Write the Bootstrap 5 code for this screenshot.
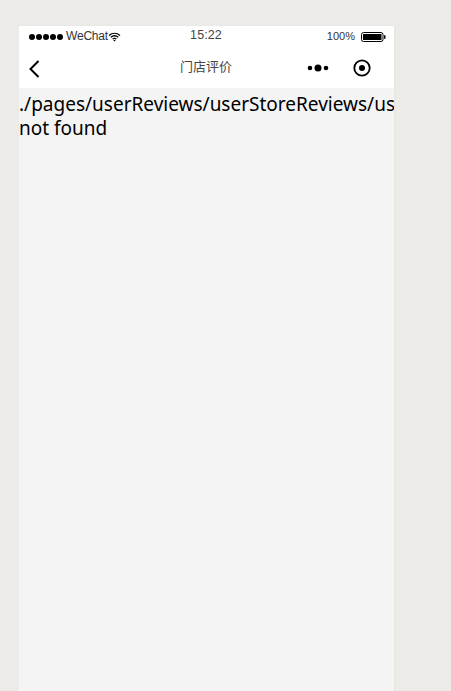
<!DOCTYPE html>
<html lang="zh">
<head>
<meta charset="utf-8">
<title>门店评价</title>
<link href="https://cdn.jsdelivr.net/npm/bootstrap@5.3.0/dist/css/bootstrap.min.css" rel="stylesheet">
<style>
html,body{height:100%;overflow:hidden}
body{background:#ecebe7;padding:26px 0 0 19px;font-family:"Liberation Sans",sans-serif}
.phone{width:375px;height:665px;background:#f4f4f5;box-shadow:1px 0 2px rgba(0,0,0,.04);overflow:hidden}
.statusline{height:21px;padding:0 8px 0 10px;font-size:12px;line-height:21px;color:#333;background:#fff}
.sgroup{width:150px}
.dots{gap:1px}
.dots i{width:6px;height:6px;border-radius:50%;background:#000;display:block}
.carrier{letter-spacing:-.2px;margin-left:3px}
.clock{font-size:12.5px;letter-spacing:.1px;margin-top:-2px;margin-left:-3px;color:#444}
.pct{font-size:11px;margin-right:6px}
.navline{height:41px;background:#fff;padding:1px 23px 0 10px}
.chev{margin-top:2px}
.navtitle{font-family:"Noto Sans CJK SC",sans-serif;font-size:13px;color:#444;left:0;right:0;top:0;line-height:38px;text-align:center;padding-right:1px}
.errtext{font-family:"Noto Sans","Noto Sans CJK SC",sans-serif;font-size:19px;line-height:24px;color:#000;padding-top:4px}
.errtext span{display:block;white-space:nowrap}
</style>
</head>
<body>
<div class="phone">
  <div class="statusline d-flex align-items-center justify-content-between">
    <div class="sgroup d-flex align-items-center">
      <div class="dots d-flex"><i></i><i></i><i></i><i></i><i></i></div>
      <span class="carrier">WeChat</span>
      <svg width="13" height="10" viewBox="0 0 13 10"><path d="M1 3.400C4.300 .6 8.700 .6 12 3.400M2.800 5.300c2.300-1.900 5.100-1.900 7.400 0M4.600 7.100c1.200-1 2.600-1 3.800 0" fill="none" stroke="#000" stroke-width="1.300"/><path d="M6.500 9.600 5.300 8.300c.8-.5 1.600-.5 2.400 0z" fill="#000"/></svg>
    </div>
    <span class="clock">15:22</span>
    <div class="sgroup d-flex align-items-center justify-content-end">
      <span class="pct">100%</span>
      <svg width="25" height="10" viewBox="0 0 25 10"><rect x=".5" y=".5" width="21.500" height="9" rx="2" fill="#fff" stroke="#000"/><rect x="2" y="2" width="18.500" height="6" fill="#000"/><path d="M23 3.200h1.500v3.600H23z" fill="#000"/></svg>
    </div>
  </div>
  <div class="navline position-relative d-flex align-items-center justify-content-between">
    <svg class="chev" width="11" height="18" viewBox="0 0 11 18"><path d="M9.500 1 1.500 9l8 8" fill="none" stroke="#000" stroke-width="2"/></svg>
    <div class="navtitle position-absolute">门店评价</div>
    <div class="d-flex align-items-center gap-4 position-relative">
      <svg width="22" height="8" viewBox="0 0 22 8"><circle cx="3" cy="4" r="2.300" fill="#000"/><circle cx="11" cy="4" r="3.500" fill="#000"/><circle cx="19" cy="4" r="2.300" fill="#000"/></svg>
      <svg width="18" height="18" viewBox="0 0 18 18"><circle cx="9" cy="9" r="7.700" fill="none" stroke="#000" stroke-width="1.800"/><circle cx="9" cy="9" r="3" fill="#000"/></svg>
    </div>
  </div>
  <div class="errtext"><span>./pages/userReviews/userStoreReviews/us</span><span>not found</span></div>
</div>
<script src="https://cdn.jsdelivr.net/npm/bootstrap@5.3.0/dist/js/bootstrap.bundle.min.js"></script>
</body>
</html>
